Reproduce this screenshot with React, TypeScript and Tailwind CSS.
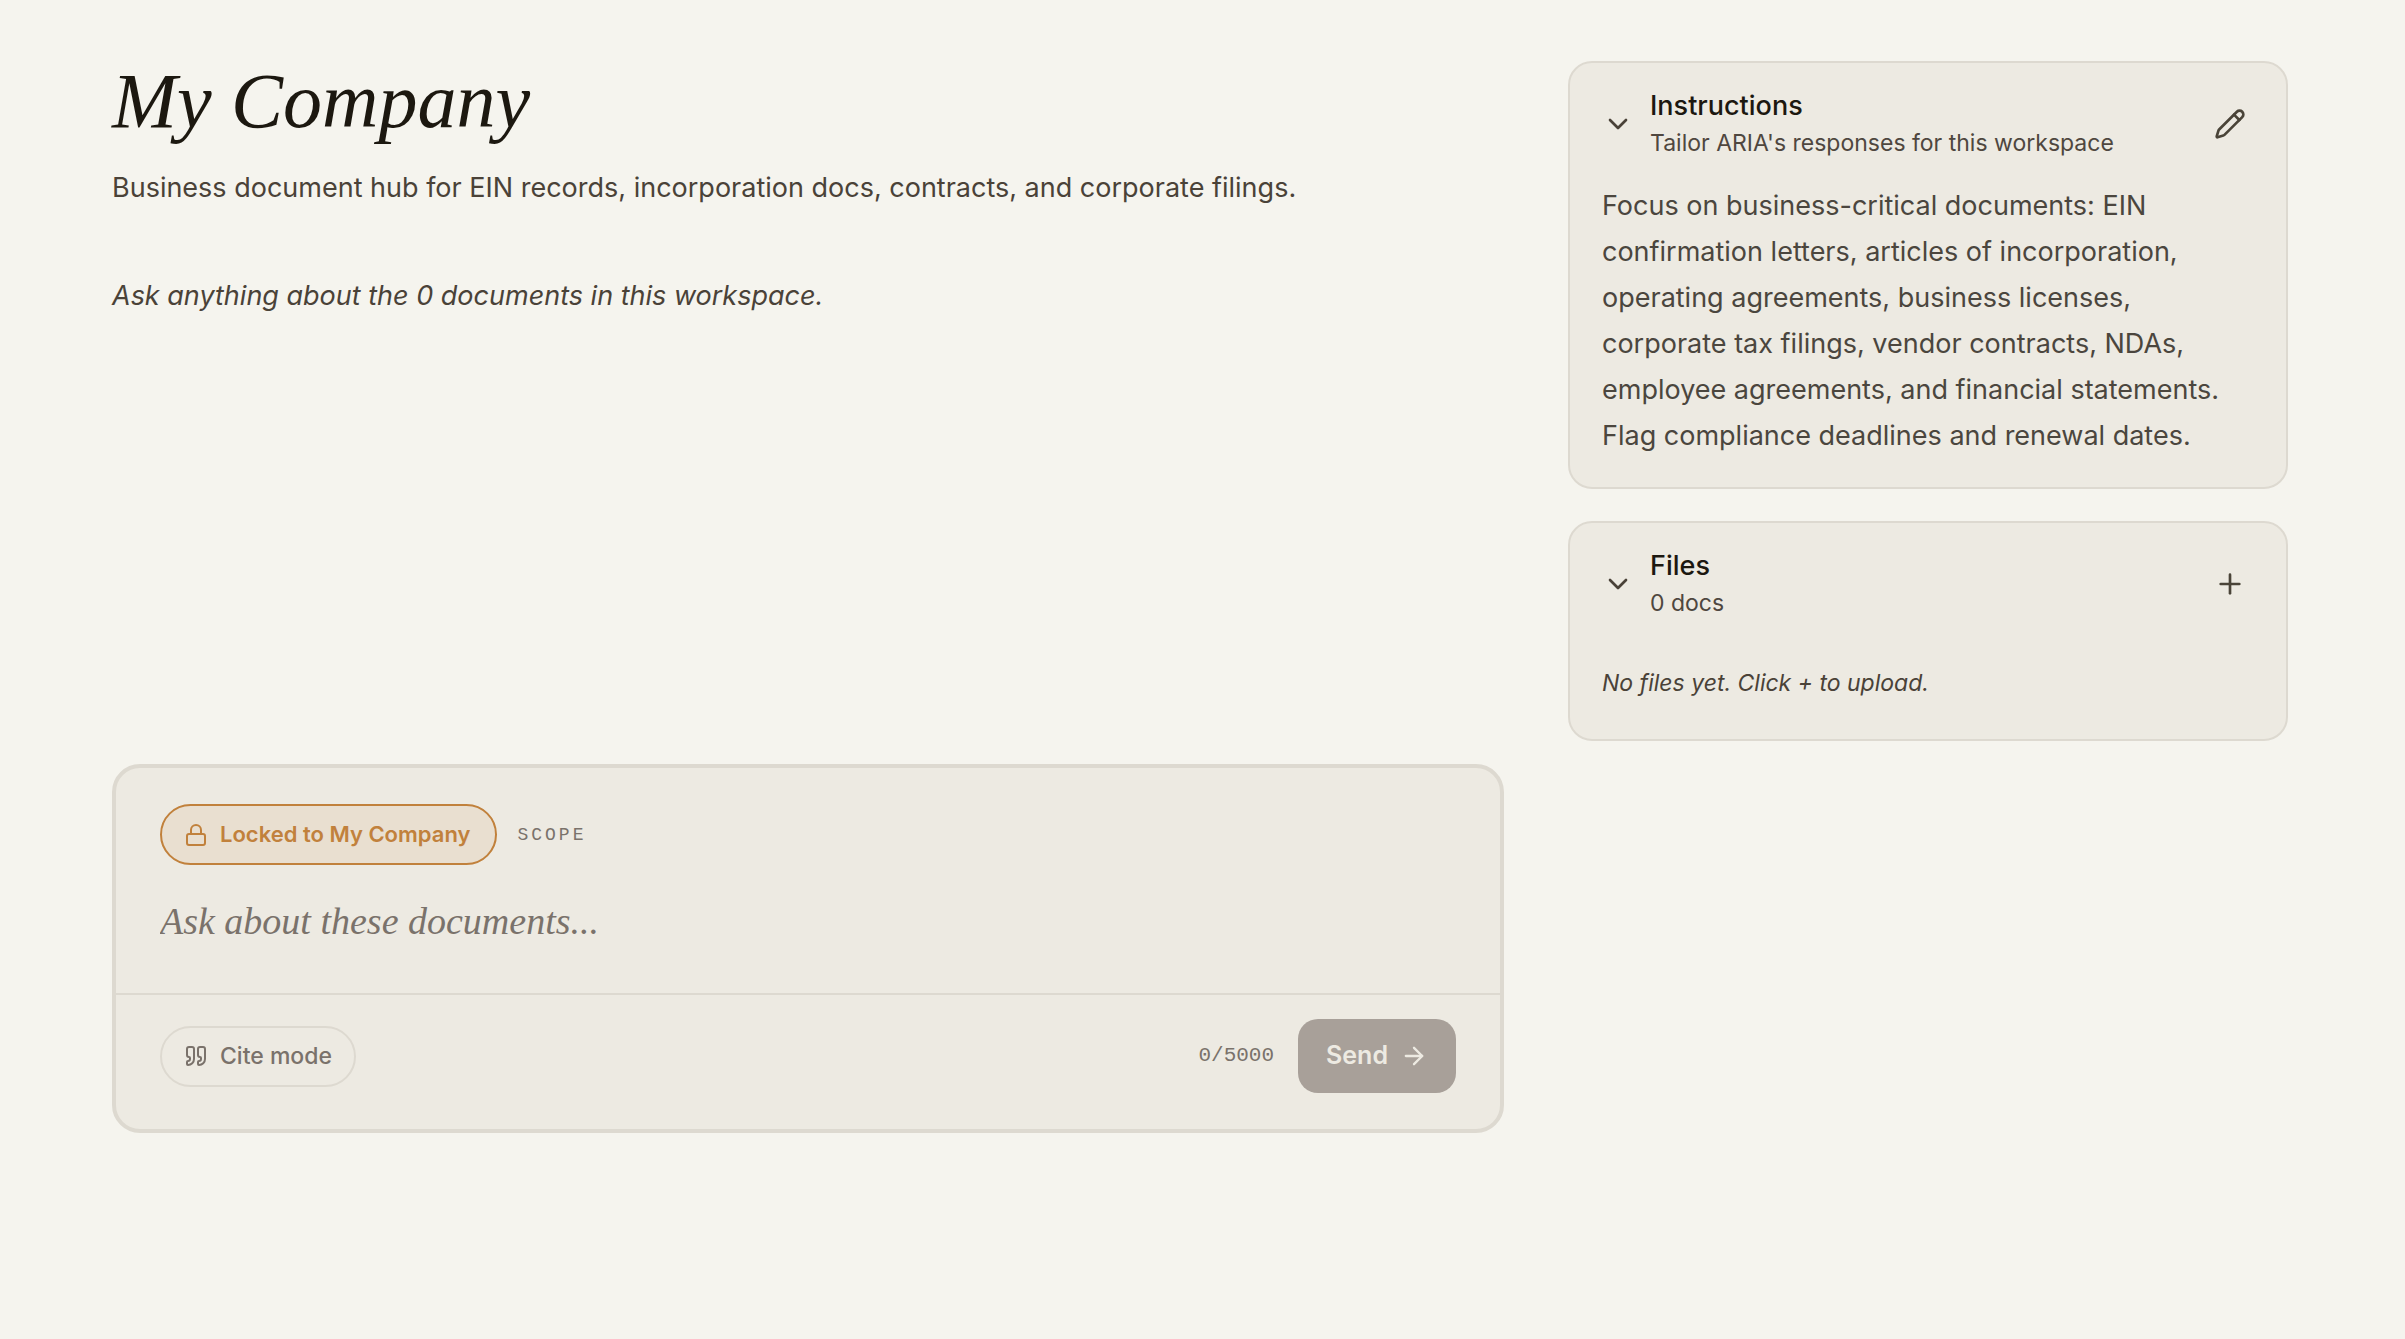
import React, { useState } from "react";
import { ArrowRight, ChevronDown, Lock, Pencil, Plus, Quote } from "lucide-react";

type PanelProps = {
  title: string;
  subtitle: string;
  actionLabel: string;
  actionIcon: React.ReactNode;
  children: React.ReactNode;
};

function Panel({ title, subtitle, actionLabel, actionIcon, children }: PanelProps) {
  const [open, setOpen] = useState(true);
  return (
    <section className="rounded-3xl border-2 border-[#ddd9d0] bg-[#edeae2] px-8 pt-6">
      <div className="flex items-center justify-between">
        <button
          type="button"
          aria-expanded={open}
          onClick={() => setOpen(!open)}
          className="flex items-center gap-4 text-left"
        >
          <ChevronDown className="size-8 text-[#4a4238]" />
          <span className="flex flex-col">
            <span className="text-[27px] leading-[38px] font-medium text-[#1c1810]">{title}</span>
            <span className="text-[23px] leading-9 text-[#4f473f]">{subtitle}</span>
          </span>
        </button>
        <button type="button" aria-label={actionLabel} className="p-2 text-[#4a4438]">
          {actionIcon}
        </button>
      </div>
      {open && children}
    </section>
  );
}

function Composer() {
  const [text, setText] = useState("");
  return (
    <form
      onSubmit={(e) => e.preventDefault()}
      className="overflow-hidden rounded-[28px] border-4 border-[#ddd9d0] bg-[#edeae2]"
    >
      <div className="px-11 pt-9 pb-10">
        <div className="flex items-center gap-5">
          <button
            type="button"
            className="flex h-[61px] items-center gap-3 rounded-full border-2 border-[#c1813c] bg-[#e9dfd0] pr-[25px] pl-[22px] text-[22px] font-semibold text-[#c1813c]"
          >
            <Lock className="size-6" />
            Locked to My Company
          </button>
          <span className="font-['Liberation_Mono',monospace] text-lg tracking-[3px] text-[#7a726b]">SCOPE</span>
        </div>
        <textarea
          rows={1}
          maxLength={5000}
          value={text}
          onChange={(e) => setText(e.target.value)}
          aria-label="Ask about these documents"
          placeholder="Ask about these documents..."
          className="mt-6 block h-16 w-full resize-none bg-transparent font-['Liberation_Serif',serif] text-[38px] leading-[64px] italic text-[#1c1810] outline-none placeholder:text-[#7a726b]"
        />
      </div>
      <div className="flex items-center justify-between border-t-2 border-[#ddd9d0] px-11 pt-6 pb-9">
        <button
          type="button"
          className="flex h-[61px] items-center gap-3 rounded-full border-2 border-[#ddd9d0] px-[22px] text-[23px] font-medium text-[#7a726b]"
        >
          <Quote className="size-6" />
          Cite mode
        </button>
        <div className="flex items-center gap-6">
          <span className="font-['Liberation_Mono',monospace] text-[21px] text-[#7a726b]">{text.length}/5000</span>
          <button
            type="submit"
            className="flex h-[74px] items-center gap-3 rounded-[20px] bg-[#a8a099] px-7 text-[25px] font-semibold text-[#edeae2]"
          >
            Send
            <ArrowRight className="size-7" />
          </button>
        </div>
      </div>
    </form>
  );
}

export default function App() {
  return (
    <main className="min-h-screen bg-[#f5f4ee] pt-[61px] pr-[117px] pb-16 pl-28 font-[Inter,sans-serif]">
      <div className="grid grid-cols-[minmax(0,1fr)_minmax(0,720px)] items-start gap-16">
        <div>
          <h1 className="font-['Liberation_Serif',serif] text-[78px] leading-[80px] italic text-[#1c1810]">
            My Company
          </h1>
          <p className="mt-[25px] text-[27px] leading-[44px] text-[#4a4238]">
            Business document hub for EIN records, incorporation docs, contracts, and corporate filings.
          </p>
          <div className="mt-16 min-h-[490px]">
            <p className="text-[27px] leading-[44px] italic text-[#4a4238]">
              Ask anything about the 0 documents in this workspace.
            </p>
          </div>
          <Composer />
        </div>
        <aside className="flex flex-col gap-8">
          <Panel
            title="Instructions"
            subtitle="Tailor ARIA's responses for this workspace"
            actionLabel="Edit instructions"
            actionIcon={<Pencil className="size-8" />}
          >
            <p className="mt-[22px] pb-7 text-[27px] leading-[46px] text-[#4b463e]">
              Focus on business-critical documents: EIN confirmation letters, articles of incorporation, operating
              agreements, business licenses, corporate tax filings, vendor contracts, NDAs, employee agreements, and
              financial statements. Flag compliance deadlines and renewal dates.
            </p>
          </Panel>
          <Panel
            title="Files"
            subtitle="0 docs"
            actionLabel="Upload files"
            actionIcon={<Plus className="size-8" />}
          >
            <p className="mt-[42px] pb-9 text-[23px] leading-10 italic text-[#4a4238]">
              No files yet. Click + to upload.
            </p>
          </Panel>
        </aside>
      </div>
    </main>
  );
}
